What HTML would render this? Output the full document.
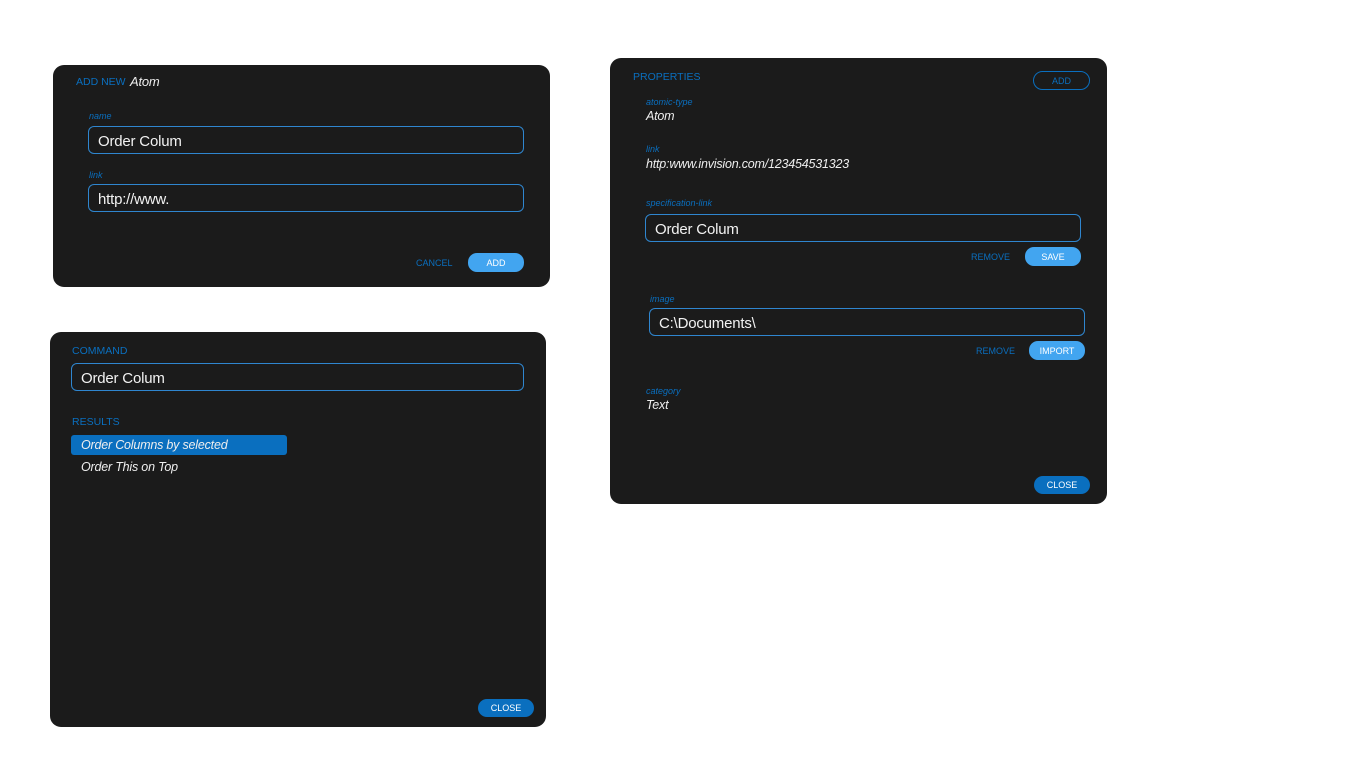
<!DOCTYPE html>
<html><head><meta charset="utf-8"><style>
*{margin:0;padding:0;box-sizing:border-box}
body{width:1367px;height:769px;background:#fff;position:relative;font-family:"Liberation Sans",Arial,sans-serif;overflow:hidden}
.p{position:absolute;background:#1b1b1b;border-radius:11px}
.a{position:absolute;white-space:nowrap}
.h{color:#0a6fbf;font-size:10.5px}
.lb{color:#0a6fbf;font-size:9px;font-style:italic}
.v{color:#eee;font-size:12.5px;font-style:italic;letter-spacing:-0.2px}
.in{position:absolute;border:1.5px solid #2f86cf;border-radius:6px;color:#f2f2f2;font-size:15px;padding-left:9px;padding-top:2px;display:flex;align-items:center;letter-spacing:-0.2px}
.btn{position:absolute;border-radius:9px;background:#42a5f0;color:#fff;font-size:9px;display:flex;align-items:center;justify-content:center}
.tb{color:#0a6fbf;font-size:9px}
</style></head><body>

<div class="p" style="left:53px;top:65px;width:497px;height:222px"></div>
<div class="a h" style="left:76px;top:76px">ADD NEW</div>
<div class="a v" style="left:130px;top:74px;font-size:13px">Atom</div>
<div class="a lb" style="left:89px;top:111px">name</div>
<div class="in" style="left:88px;top:126px;width:436px;height:28px">Order Colum</div>
<div class="a lb" style="left:89px;top:170px">link</div>
<div class="in" style="left:88px;top:184px;width:436px;height:28px">http://www.</div>
<div class="a tb" style="left:416px;top:258px">CANCEL</div>
<div class="btn" style="left:468px;top:253px;width:56px;height:19px">ADD</div>

<div class="p" style="left:50px;top:332px;width:496px;height:395px"></div>
<div class="a h" style="left:72px;top:345px">COMMAND</div>
<div class="in" style="left:71px;top:363px;width:453px;height:28px">Order Colum</div>
<div class="a h" style="left:72px;top:416px">RESULTS</div>
<div class="a" style="left:71px;top:435px;width:216px;height:20px;background:#0a6fbf;border-radius:3px"></div>
<div class="a v" style="left:81px;top:438px">Order Columns by selected</div>
<div class="a v" style="left:81px;top:460px">Order This on Top</div>
<div class="btn" style="left:478px;top:699px;width:56px;height:18px;background:#0a6fbf">CLOSE</div>

<div class="p" style="left:610px;top:58px;width:497px;height:446px"></div>
<div class="a h" style="left:633px;top:71px">PROPERTIES</div>
<div class="a" style="left:1033px;top:71px;width:57px;height:19px;border:1.5px solid #0a6fbf;border-radius:10px;color:#0a6fbf;font-size:9px;display:flex;align-items:center;justify-content:center">ADD</div>
<div class="a lb" style="left:646px;top:97px">atomic-type</div>
<div class="a v" style="left:646px;top:109px">Atom</div>
<div class="a lb" style="left:646px;top:144px">link</div>
<div class="a v" style="left:646px;top:157px">http:www.invision.com/123454531323</div>
<div class="a lb" style="left:646px;top:198px">specification-link</div>
<div class="in" style="left:645px;top:214px;width:436px;height:28px">Order Colum</div>
<div class="a tb" style="left:971px;top:252px">REMOVE</div>
<div class="btn" style="left:1025px;top:247px;width:56px;height:19px">SAVE</div>
<div class="a lb" style="left:650px;top:294px">image</div>
<div class="in" style="left:649px;top:308px;width:436px;height:28px">C:\Documents\</div>
<div class="a tb" style="left:976px;top:346px">REMOVE</div>
<div class="btn" style="left:1029px;top:341px;width:56px;height:19px">IMPORT</div>
<div class="a lb" style="left:646px;top:386px">category</div>
<div class="a v" style="left:646px;top:398px">Text</div>
<div class="btn" style="left:1034px;top:476px;width:56px;height:18px;background:#0a6fbf">CLOSE</div>
</body></html>
